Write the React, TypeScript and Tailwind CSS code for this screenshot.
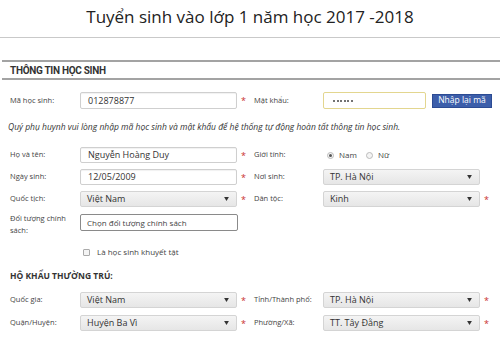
import React from "react";

const font = { fontFamily: '"Open Sans", "DejaVu Sans", sans-serif' };

const Star = () => (
  <span className="w-[17px] pl-[4px] text-[9px] leading-none text-[#c9302c]">*</span>
);

const Label = ({ children, w = "w-[70px]" }: { children: React.ReactNode; w?: string }) => (
  <div className={`${w} shrink-0 text-[7.5px] text-[#444]`}>{children}</div>
);

const TextBox = ({ value, className = "" }: { value: string; className?: string }) => (
  <div
    className={`flex h-[16px] w-[157px] shrink-0 items-center rounded-[2px] border border-[#cfcfcf] bg-white px-[7px] text-[9px] text-[#333] shadow-[inset_0_1px_1px_rgba(0,0,0,0.06)] ${className}`}
  >
    {value}
  </div>
);

const Select = ({ value }: { value: string }) => (
  <div className="flex h-[16px] w-[157px] shrink-0 items-center justify-between rounded-[2px] border border-[#d4d4d4] bg-gradient-to-b from-[#f4f4f4] to-[#e6e6e6] pl-[6px] pr-[7px] text-[9px] text-[#333]">
    <span>{value}</span>
    <svg width="5" height="4" viewBox="0 0 6 5">
      <path d="M0 0h6L3 5z" fill="#333" />
    </svg>
  </div>
);

const Radio = ({ checked }: { checked?: boolean }) => (
  <span className="flex h-[7px] w-[7px] items-center justify-center rounded-full border border-[#bbb] bg-[#f4f4f4]">
    {checked && <span className="h-[3px] w-[3px] rounded-full bg-[#555]" />}
  </span>
);

export default function App() {
  return (
    <div className="h-[339px] w-[500px] overflow-hidden bg-white" style={font}>
      <div className="flex h-[38px] items-center justify-center border-b border-[#c9c9c9] pb-[4px] text-[17px] text-[#222]">
        Tuyển sinh vào lớp 1 năm học 2017 -2018
      </div>

      <div
        className="ml-[2px] mt-[22px] flex h-[20px] items-center border-y-2 border-[#a3a3a3] pl-[8px] text-[10px] font-bold tracking-[-0.3px] text-[#333]"
        style={{ fontFamily: "Roboto, sans-serif" }}
      >
        THÔNG TIN HỌC SINH
      </div>

      <div className="pl-[10px]">
        <div className="mt-[12px] flex h-[17px] items-center">
          <Label>Mã học sinh:</Label>
          <TextBox value="012878877" className="h-[17px]" />
          <Star />
          <Label w="w-[69px]">Mật khẩu:</Label>
          <div className="flex h-[17px] w-[103px] items-center gap-[1.5px] rounded-[2px] border border-[#e3d68f] bg-white px-[9px]">
            {[0, 1, 2, 3, 4, 5].map((i) => (
              <span key={i} className="h-[2px] w-[2px] rounded-full bg-[#444]" />
            ))}
          </div>
          <div className="ml-[6px] flex h-[14px] w-[60px] items-center justify-center border border-[#2c4b93] bg-[#3c5eaa] text-[8.5px] text-white">
            Nhập lại mã
          </div>
        </div>

        <div className="-ml-[2px] mt-[12px] flex h-[12px] items-center text-[8.5px] italic text-[#333]">
          Quý phụ huynh vui lòng nhập mã học sinh và mật khẩu để hệ thống tự động hoàn tất thông tin học sinh.
        </div>

        <div className="mt-[14px] flex h-[16px] items-center">
          <Label>Họ và tên:</Label>
          <TextBox value="Nguyễn Hoàng Duy" />
          <Star />
          <Label w="w-[69px]">Giới tính:</Label>
          <div className="flex items-center gap-[5px] pl-[4px] text-[8px] text-[#444]">
            <Radio checked />
            <span>Nam</span>
            <span className="ml-[4px]">
              <Radio />
            </span>
            <span>Nữ</span>
          </div>
        </div>

        <div className="mt-[6px] flex h-[16px] items-center">
          <Label>Ngày sinh:</Label>
          <TextBox value="12/05/2009" />
          <Star />
          <Label w="w-[69px]">Nơi sinh:</Label>
          <Select value="TP. Hà Nội" />
        </div>

        <div className="mt-[6px] flex h-[16px] items-center">
          <Label>Quốc tịch:</Label>
          <Select value="Việt Nam" />
          <Star />
          <Label w="w-[69px]">Dân tộc:</Label>
          <Select value="Kinh" />
          <Star />
        </div>

        <div className="mt-[7px] flex items-start">
          <div className="-mt-[2px] w-[70px] shrink-0 text-[7.5px] leading-[12px] text-[#444]">
            Đối tượng chính
            <br />
            sách:
          </div>
          <div className="flex h-[17px] w-[158px] items-center rounded-[2px] border border-[#8a8a8a] bg-white px-[6px] text-[8px] text-[#444]">
            Chọn đối tượng chính sách
          </div>
        </div>

        <div className="mt-[10px] flex h-[12px] items-center pl-[73px] text-[8px] text-[#444]">
          <span className="mr-[7px] h-[7px] w-[7px] rounded-[1px] border border-[#aaa] bg-[#f4f4f4]" />
          Là học sinh khuyết tật
        </div>

        <div className="mt-[12px] flex h-[12px] items-center text-[8.5px] font-bold text-[#333]">
          HỘ KHẨU THƯỜNG TRÚ:
        </div>

        <div className="mt-[10px] flex h-[16px] items-center">
          <Label>Quốc gia:</Label>
          <Select value="Việt Nam" />
          <Star />
          <Label w="w-[69px]">Tỉnh/Thành phố:</Label>
          <Select value="TP. Hà Nội" />
          <Star />
        </div>

        <div className="mt-[7px] flex h-[16px] items-center">
          <Label>Quận/Huyện:</Label>
          <Select value="Huyện Ba Vì" />
          <Star />
          <Label w="w-[69px]">Phường/Xã:</Label>
          <Select value="TT. Tây Đằng" />
          <Star />
        </div>
      </div>
    </div>
  );
}
